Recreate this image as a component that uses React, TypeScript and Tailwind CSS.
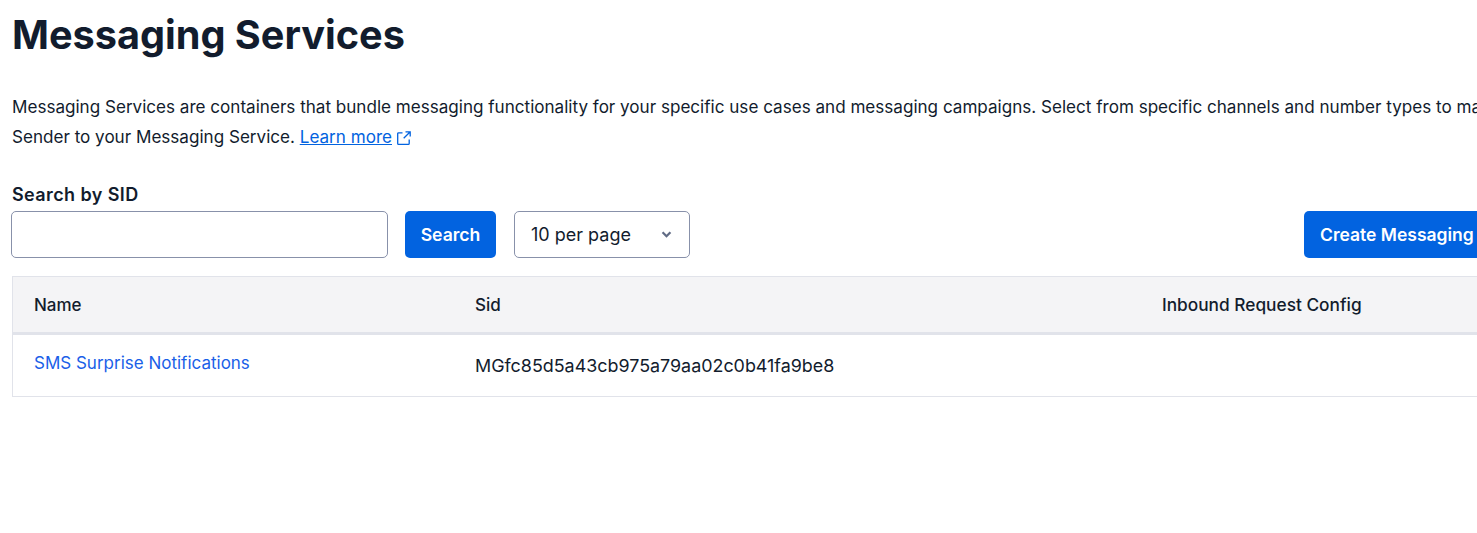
import React from 'react';

const ExternalIcon = () => (
  <svg viewBox="0 0 16 16" fill="none" stroke="currentColor" strokeWidth="1.3" className="inline-block h-[16px] w-[16px] ml-[4px] align-[-3px]">
    <path d="M6.5 2.8H2.6a.9.9 0 0 0-.9.9v9.7c0 .5.4.9.9.9h9.7c.5 0 .9-.4.9-.9V9.5" />
    <path d="M9.5 1.8h4.7v4.7M14 2l-6.3 6.3" />
  </svg>
);

const Chevron = () => (
  <svg viewBox="0 0 12 8" fill="none" stroke="#606b85" strokeWidth="2.6" className="h-[7px] w-[11px]">
    <path d="M1.5 1.5 6 6l4.5-4.5" />
  </svg>
);

export default function App() {
  return (
    <div className="h-[533px] w-[1477px] overflow-hidden bg-white text-[#121c2d] font-['Inter',sans-serif]">
      <div className="w-[1800px] pl-[12px]">
        <h1 className="pt-[10px] text-[39.65px] leading-[50px] font-bold">Messaging Services</h1>

        <div className="mt-[32px] text-[17.08px] leading-[30px] whitespace-nowrap">
          <p>
            Messaging Services are containers that bundle messaging functionality for your specific use cases and messaging campaigns. Select from specific channels and number types to match your use case, then add a
          </p>
          <p>
            Sender to your Messaging Service.{' '}
            <a href="#" className="text-[#0263e0] underline">Learn more</a>
            <span className="text-[#0263e0]"><ExternalIcon /></span>
          </p>
        </div>

        <label className="mt-[31px] block text-[18px] leading-[24px] font-semibold tracking-[0.4px]">Search by SID</label>
        <div className="mt-[4px] flex items-center -ml-[1px]">
          <input className="h-[47px] w-[377px] rounded-[5px] border border-[#8891aa] bg-white" />
          <button className="ml-[17px] h-[47px] w-[91px] rounded-[5px] bg-[#0263e0] pt-[1px] text-[17.6px] font-semibold text-white">Search</button>
          <div className="ml-[18px] flex h-[47px] w-[176px] items-center justify-between rounded-[5px] border border-[#8891aa] pl-[16px] pr-[17px] text-[18px]">
            <span>10 per page</span>
            <Chevron />
          </div>
          <button className="ml-[614px] h-[47px] w-[260px] rounded-[5px] bg-[#0263e0] pt-[1px] pl-[16px] text-left text-[17.5px] font-semibold whitespace-nowrap text-white">Create Messaging Service</button>
        </div>

        <div className="mt-[18px] border border-[#e1e3ea]">
          <div className="flex h-[58px] items-center border-b-[3px] border-[#e1e3ea] bg-[#f4f4f6] text-[17px] font-medium">
            <div className="w-[462px] pl-[21px] pt-[2px]">Name</div>
            <div className="w-[687px] pt-[2px]">Sid</div>
            <div className="text-[17.3px]">Inbound Request Config</div>
          </div>
          <div className="flex h-[61px] text-[17px]">
            <div className="w-[462px] pl-[21px] pt-[16px] leading-[24px]">
              <a href="#" className="text-[#1a5fe8]">SMS Surprise Notifications</a>
            </div>
            <div className="pt-[19px] leading-[24px] text-[17.9px]">MGfc85d5a43cb975a79aa02c0b41fa9be8</div>
          </div>
        </div>
      </div>
    </div>
  );
}
